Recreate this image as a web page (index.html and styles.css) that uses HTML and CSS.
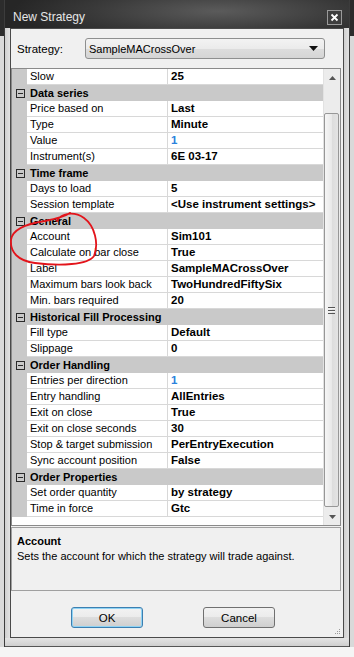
FILE: index.html
```html
<!DOCTYPE html>
<html>
<head>
<meta charset="utf-8">
<link rel="stylesheet" href="styles.css">
</head>
<body>
<div class="screen">
  <div class="dialog">
    <div class="titlebar">
      <span class="title">New Strategy</span>
      <span class="close"><svg width="9" height="9" viewBox="0 0 9 9"><path d="M1.5 1.5 L7.5 7.5 M7.5 1.5 L1.5 7.5" stroke="#fff" stroke-width="1.8"/></svg></span>
    </div>
    <div class="frame-body">
      <div class="side left"></div>
      <div class="client">
        <div class="strategy-row">
          <span class="lbl">Strategy:</span>
          <div class="combo"><span class="combo-text">SampleMACrossOver</span><svg class="combo-arrow" width="9" height="5" viewBox="0 0 9 5"><path d="M0 0 H9 L4.5 5 Z" fill="#111"/></svg></div>
        </div>
        <div class="grid">
          <div class="rows">
            <div class="row"><div class="mg"></div><div class="name">Slow</div><div class="val">25</div></div>
            <div class="row cat"><div class="mg"><span class="box"></span></div><div class="cat-title">Data series</div></div>
            <div class="row"><div class="mg"></div><div class="name">Price based on</div><div class="val">Last</div></div>
            <div class="row"><div class="mg"></div><div class="name">Type</div><div class="val">Minute</div></div>
            <div class="row"><div class="mg"></div><div class="name">Value</div><div class="val"><span class="num">1</span></div></div>
            <div class="row"><div class="mg"></div><div class="name">Instrument(s)</div><div class="val">6E 03-17</div></div>
            <div class="row cat"><div class="mg"><span class="box"></span></div><div class="cat-title">Time frame</div></div>
            <div class="row"><div class="mg"></div><div class="name">Days to load</div><div class="val">5</div></div>
            <div class="row"><div class="mg"></div><div class="name">Session template</div><div class="val">&lt;Use instrument settings&gt;</div></div>
            <div class="row cat"><div class="mg"><span class="box"></span></div><div class="cat-title">General</div></div>
            <div class="row"><div class="mg"></div><div class="name">Account</div><div class="val">Sim101</div></div>
            <div class="row"><div class="mg"></div><div class="name">Calculate on bar close</div><div class="val">True</div></div>
            <div class="row"><div class="mg"></div><div class="name">Label</div><div class="val">SampleMACrossOver</div></div>
            <div class="row"><div class="mg"></div><div class="name">Maximum bars look back</div><div class="val">TwoHundredFiftySix</div></div>
            <div class="row"><div class="mg"></div><div class="name">Min. bars required</div><div class="val">20</div></div>
            <div class="row cat"><div class="mg"><span class="box"></span></div><div class="cat-title">Historical Fill Processing</div></div>
            <div class="row"><div class="mg"></div><div class="name">Fill type</div><div class="val">Default</div></div>
            <div class="row"><div class="mg"></div><div class="name">Slippage</div><div class="val">0</div></div>
            <div class="row cat"><div class="mg"><span class="box"></span></div><div class="cat-title">Order Handling</div></div>
            <div class="row"><div class="mg"></div><div class="name">Entries per direction</div><div class="val"><span class="num">1</span></div></div>
            <div class="row"><div class="mg"></div><div class="name">Entry handling</div><div class="val">AllEntries</div></div>
            <div class="row"><div class="mg"></div><div class="name">Exit on close</div><div class="val">True</div></div>
            <div class="row"><div class="mg"></div><div class="name">Exit on close seconds</div><div class="val">30</div></div>
            <div class="row"><div class="mg"></div><div class="name">Stop &amp; target submission</div><div class="val">PerEntryExecution</div></div>
            <div class="row"><div class="mg"></div><div class="name">Sync account position</div><div class="val">False</div></div>
            <div class="row cat"><div class="mg"><span class="box"></span></div><div class="cat-title">Order Properties</div></div>
            <div class="row"><div class="mg"></div><div class="name">Set order quantity</div><div class="val">by strategy</div></div>
            <div class="row"><div class="mg"></div><div class="name">Time in force</div><div class="val">Gtc</div></div>
          </div>
          <div class="vscroll">
            <div class="sb-btn"><svg width="7" height="4" viewBox="0 0 7 4"><path d="M0 4 L3.5 0 L7 4 Z" fill="#555"/></svg></div>
            <div class="sb-track">
              <div class="thumb"><span class="grip-lines"></span></div>
            </div>
            <div class="sb-btn"><svg width="7" height="4" viewBox="0 0 7 4"><path d="M0 0 L7 0 L3.5 4 Z" fill="#555"/></svg></div>
          </div>
        </div>
        <div class="desc">
          <div class="desc-title">Account</div>
          <div class="desc-text">Sets the account for which the strategy will trade against.</div>
        </div>
        <div class="buttons">
          <button class="btn default">OK</button>
          <button class="btn">Cancel</button>
        </div>
        <div class="grip-row">
          <svg width="7" height="7" viewBox="0 0 7 7"><g fill="#9a9a9a"><rect x="5" y="0" width="1" height="1"/><rect x="3" y="2" width="1" height="1"/><rect x="5" y="2" width="1" height="1"/><rect x="1" y="4" width="1" height="1"/><rect x="3" y="4" width="1" height="1"/><rect x="5" y="4" width="1" height="1"/></g></svg>
        </div>
      </div>
      <div class="side right"></div>
    </div>
    <div class="bottom-frame"></div>
  </div>
  <svg class="annotation" width="354" height="657" viewBox="0 0 354 657">
    <path d="M57 221 C61 213, 74 211, 84 218 C95 226, 99 244, 94 256 C88 265, 60 266, 35 263 C18 261, 10 252, 11 240 C12 230, 25 224, 45 221 C55 219, 64 217, 70 213" fill="none" stroke="#e3141b" stroke-width="1.8" stroke-linecap="round"/>
  </svg>
</div>
</body>
</html>
```

FILE: styles.css
```css
html, body {
  margin: 0;
  padding: 0;
}
body {
  background: #f4f4f4;
  font-family: "Liberation Sans", Arial, sans-serif;
}
.screen {
  width: 354px;
  height: 657px;
  position: relative;
  overflow: hidden;
  background: linear-gradient(#2c2c2c 0 36px, #d9d9d9 36px 647px, #f5f5f5 647px);
}
.dialog {
  width: 346px;
  height: 647px;
  margin-left: 4px;
  box-sizing: border-box;
  border-left: 1px solid #3c3c3c;
  border-right: 1px solid #3c3c3c;
  display: flex;
  flex-direction: column;
}
.titlebar {
  height: 28px;
  flex: none;
  display: flex;
  align-items: flex-start;
  background: radial-gradient(ellipse 60% 120% at 62% 40%, #5b5b5b, #3a3a3a 60%, #262626);
}
.title {
  margin: 10px 0 0 8px;
  font-size: 12px;
  line-height: 14px;
  color: #e6e6e6;
}
.close {
  margin: 10px 7px 0 auto;
  width: 15px;
  height: 15px;
  box-sizing: border-box;
  border: 1px solid #9a9a9a;
  background: #3e3e3e;
  display: flex;
  align-items: center;
  justify-content: center;
}
.close svg { display: block; }
.frame-body {
  flex: 1;
  display: flex;
}
.side {
  width: 5px;
  background: linear-gradient(to right, #cfcfcf, #e2e2e2);
}
.client {
  width: 332px;
  border: 1px solid #4a4a4a;
  background: #f0f0f0;
  display: flex;
  flex-direction: column;
}
.strategy-row {
  display: flex;
  align-items: center;
  height: 21px;
  margin-top: 9px;
  padding-left: 6px;
}
.lbl {
  width: 68px;
  font-size: 11.5px;
  color: #000;
}
.combo {
  width: 240px;
  height: 21px;
  box-sizing: border-box;
  border: 1px solid #8e8f8f;
  border-radius: 3px;
  background: linear-gradient(#f3f3f3 0, #ebebeb 50%, #dddddd 50%, #d5d5d5 100%);
  display: flex;
  align-items: center;
  padding: 0 6px 0 3px;
}
.combo-text {
  flex: 1;
  font-size: 11px;
  color: #000;
}
.combo-arrow { display: block; }
.grid {
  margin-top: 9px;
  margin-right: 2px;
  height: 458px;
  box-sizing: border-box;
  border: 1px solid #8a8a8a;
  background: #fff;
  display: flex;
}
.rows {
  width: 311px;
}
.row {
  display: grid;
  grid-template-columns: 15px 141px 155px;
  height: 16px;
}
.mg {
  background: #c9c9c9;
  display: flex;
  align-items: center;
}
.name, .val {
  box-sizing: border-box;
  border-bottom: 1px solid #d8d8d8;
  padding-left: 3px;
  line-height: 15px;
  white-space: nowrap;
  overflow: hidden;
  color: #000;
}
.name {
  border-right: 1px solid #d8d8d8;
  font-size: 11px;
}
.val {
  font-size: 11.5px;
  font-weight: bold;
}
.num {
  color: #2b82dc;
}
.row.cat {
  background: #c9c9c9;
}
.cat-title {
  grid-column: 2 / 4;
  padding-left: 3px;
  font-size: 11px;
  font-weight: bold;
  line-height: 16px;
  color: #000;
}
.box {
  width: 9px;
  height: 9px;
  box-sizing: border-box;
  margin-left: 4px;
  border: 1px solid #2a2a2a;
  background: linear-gradient(#2a2a2a, #2a2a2a) center / 5px 1px no-repeat;
}
.vscroll {
  width: 17px;
  display: flex;
  flex-direction: column;
  background: #ececec;
  border-left: 1px solid #e2e2e2;
  box-sizing: border-box;
}
.sb-btn {
  height: 17px;
  display: flex;
  align-items: center;
  justify-content: center;
}
.sb-btn svg { display: block; }
.sb-track {
  flex: 1;
  display: flex;
  flex-direction: column;
  padding: 27px 1px 1px 0;
}
.thumb {
  flex: 1;
  border: 1px solid #979797;
  border-radius: 2px;
  background: linear-gradient(to right, #f6f6f6, #e9e9e9 50%, #dcdcdc 50%, #e4e4e4);
  display: flex;
  align-items: center;
  justify-content: center;
}
.grip-lines {
  width: 7px;
  height: 7px;
  background: repeating-linear-gradient(#555 0 1px, #f4f4f4 1px 2px, transparent 2px 3px);
}
.desc {
  margin-top: 1px;
  margin-right: 2px;
  height: 64px;
  box-sizing: border-box;
  border: 1px solid #a0a0a0;
  padding: 6px 5px;
  font-size: 11px;
  line-height: 15px;
  color: #000;
}
.desc-title {
  font-weight: bold;
}
.buttons {
  display: flex;
  gap: 60px;
  padding-left: 60px;
  margin-top: 16px;
}
.btn {
  width: 72px;
  height: 21px;
  box-sizing: border-box;
  border: 1px solid #707070;
  border-radius: 3px;
  background: linear-gradient(#f2f2f2 0, #ebebeb 50%, #dddddd 50%, #cfcfcf 100%);
  font-family: "Liberation Sans", Arial, sans-serif;
  font-size: 11.5px;
  color: #000;
  padding: 0;
}
.btn.default {
  border-color: #3c7fb1;
  box-shadow: inset 0 0 0 1px #8fd3f4;
}
.grip-row {
  margin-top: auto;
  display: flex;
  justify-content: flex-end;
  padding: 0 2px 1px 0;
}
.grip-row svg { display: block; }
.bottom-frame {
  height: 9px;
  background: linear-gradient(#e4e4e4, #cfcfcf);
  border-bottom: 1px solid #555;
  box-sizing: border-box;
}
.annotation {
  position: absolute;
  left: 0;
  top: 0;
  pointer-events: none;
}
```
